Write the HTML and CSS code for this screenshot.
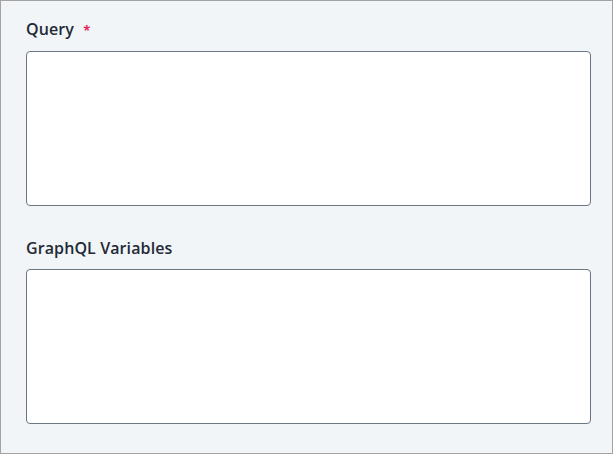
FILE: index.html
```html
<!DOCTYPE html>
<html>
<head>
<meta charset="utf-8">
<link rel="stylesheet" href="styles.css">
</head>
<body>
<div class="panel">
  <div class="field">
    <label class="label">Query <span class="req">*</span></label>
    <textarea class="input"></textarea>
  </div>
  <div class="field">
    <label class="label">GraphQL Variables</label>
    <textarea class="input"></textarea>
  </div>
</div>
</body>
</html>
```
FILE: styles.css
```css
html, body { margin: 0; padding: 0; }
body { font-family: "Open Sans", "Noto Sans", sans-serif; }
.panel {
  box-sizing: border-box;
  width: 613px;
  height: 454px;
  border: 1px solid #a3a3a3;
  background: #f2f5f8;
  padding: 15px 22px 0 25px;
  display: flex;
  flex-direction: column;
  gap: 29px;
}
.field { display: flex; flex-direction: column; gap: 8px; }
.label {
  font-size: 16px;
  line-height: 26px;
  font-weight: 600;
  color: #222a36;
  letter-spacing: 0.1px;
}
.req { color: #e0245e; font-size: 13px; margin-left: 5px; font-weight: 700; }
.input {
  box-sizing: border-box;
  width: 565px;
  height: 155px;
  margin: 0;
  border: 1px solid #6b7685;
  border-radius: 4px;
  background: #fff;
  resize: none;
  display: block;
}
```
